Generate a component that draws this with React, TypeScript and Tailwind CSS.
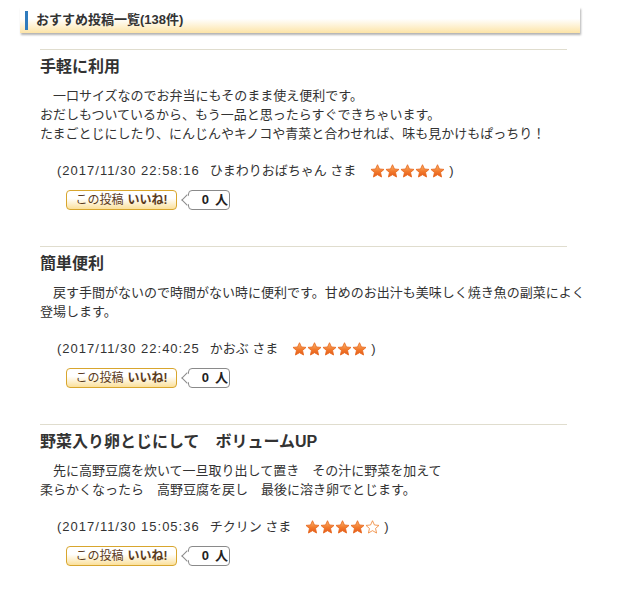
import React from 'react';

interface Post {
    title: string;
    body: string[];
    date: string;
    author: string;
    rating: number;
}

const posts: Post[] = [
    {
        title: '手軽に利用',
        body: [
            '　一口サイズなのでお弁当にもそのまま使え便利です。',
            'おだしもついているから、もう一品と思ったらすぐできちゃいます。',
            'たまごとじにしたり、にんじんやキノコや青菜と合わせれば、味も見かけもぱっちり！',
        ],
        date: '2017/11/30 22:58:16',
        author: 'ひまわりおばちゃん',
        rating: 5,
    },
    {
        title: '簡単便利',
        body: [
            '　戻す手間がないので時間がない時に便利です。甘めのお出汁も美味しく焼き魚の副菜によく',
            '登場します。',
        ],
        date: '2017/11/30 22:40:25',
        author: 'かおぶ',
        rating: 5,
    },
    {
        title: '野菜入り卵とじにして　ボリュームUP',
        body: [
            '　先に高野豆腐を炊いて一旦取り出して置き　その汁に野菜を加えて',
            '柔らかくなったら　高野豆腐を戻し　最後に溶き卵でとじます。',
        ],
        date: '2017/11/30 15:05:36',
        author: 'チクリン',
        rating: 4,
    },
];

// Star drawing, filled or outline
function Star({ filled, id }: { filled: boolean; id: string }) {
    return (
        <svg width="15" height="14" viewBox="0 0 24 23" className="shrink-0">
            <defs>
                <linearGradient id={id} x1="0" y1="0" x2="0" y2="1">
                    <stop offset="0" stopColor="#fbb872" />
                    <stop offset="0.55" stopColor="#f27a2c" />
                    <stop offset="1" stopColor="#e4581a" />
                </linearGradient>
            </defs>
            <path
                d="M12 1.2l3.2 7 7.5.7-5.7 5 1.7 7.5L12 17.5l-6.7 3.9 1.7-7.5-5.7-5 7.5-.7z"
                fill={filled ? `url(#${id})` : '#fff'}
                stroke={filled ? '#e8691f' : '#f08a3c'}
                strokeWidth="1.4"
                strokeLinejoin="round"
            />
        </svg>
    );
}

function LikeRow() {
    return (
        <div className="flex items-center mt-[10px] ml-[26px]">
            <button className="h-[20px] w-[111px] rounded-[4px] border border-[#d8a62e] bg-gradient-to-b from-white from-40% to-[#fbe09a] text-[12px] leading-[18px] text-[#5b3b1d] flex items-center justify-center">
                <span>この投稿</span>
                <span className="ml-[4px] font-bold">いいね!</span>
            </button>
            <div className="relative ml-[11px] h-[20px] w-[42px] rounded-[4px] border border-[#8a8a8a] bg-white text-[13px] leading-[18px] font-bold text-[#222] flex items-center justify-end pr-[1px]">
                <span className="absolute -left-[6px] top-[5px] h-[8px] w-[8px] rotate-45 border-b border-l border-[#8a8a8a] bg-white" />
                <span>0</span>
                <span className="ml-[6px]">人</span>
            </div>
        </div>
    );
}

export default function App() {
    return (
        <div
            className="w-[621px] min-h-[602px] bg-white text-[#333] pt-[7px] overflow-hidden"
            style={{ fontFamily: '"Liberation Sans", "Noto Sans CJK JP", sans-serif' }}
        >
            <div className="ml-[20px] w-[560px] h-[26px] bg-gradient-to-b from-white from-45% to-[#fde4a6] shadow-[1px_2px_2px_rgba(0,0,0,0.3)] flex items-center pl-[5px]">
                <div className="w-[3px] h-[19px] bg-[#2f7bbd]" />
                <h2 className="ml-[8px] text-[13px] font-bold text-[#333]">おすすめ投稿一覧(138件)</h2>
            </div>

            <div className="ml-[40px] w-[527px] mt-[16px]">
                {posts.map((post, i) => (
                    <div key={i} className="border-t border-[#e0ddce] pb-[36px]">
                        <h3 className="mt-[7px] text-[16px] leading-[20px] font-bold text-[#333]">{post.title}</h3>
                        <div className="mt-[9px] text-[13px] leading-[19px] whitespace-nowrap">
                            {post.body.map((line, j) => (
                                <p key={j}>{line}</p>
                            ))}
                        </div>
                        <div className="mt-[18px] ml-[17px] flex items-center text-[13px] leading-[19px] whitespace-nowrap">
                            <span className="tracking-[1px]">({post.date}</span>
                            <span className="ml-[10px]">{post.author} さま</span>
                            <span className="ml-[14px] flex">
                                {[0, 1, 2, 3, 4].map(k => (
                                    <Star key={k} filled={k < post.rating} id={`g${i}${k}`} />
                                ))}
                            </span>
                            <span className="ml-[4px]">)</span>
                        </div>
                        <LikeRow />
                    </div>
                ))}
            </div>
        </div>
    );
}
